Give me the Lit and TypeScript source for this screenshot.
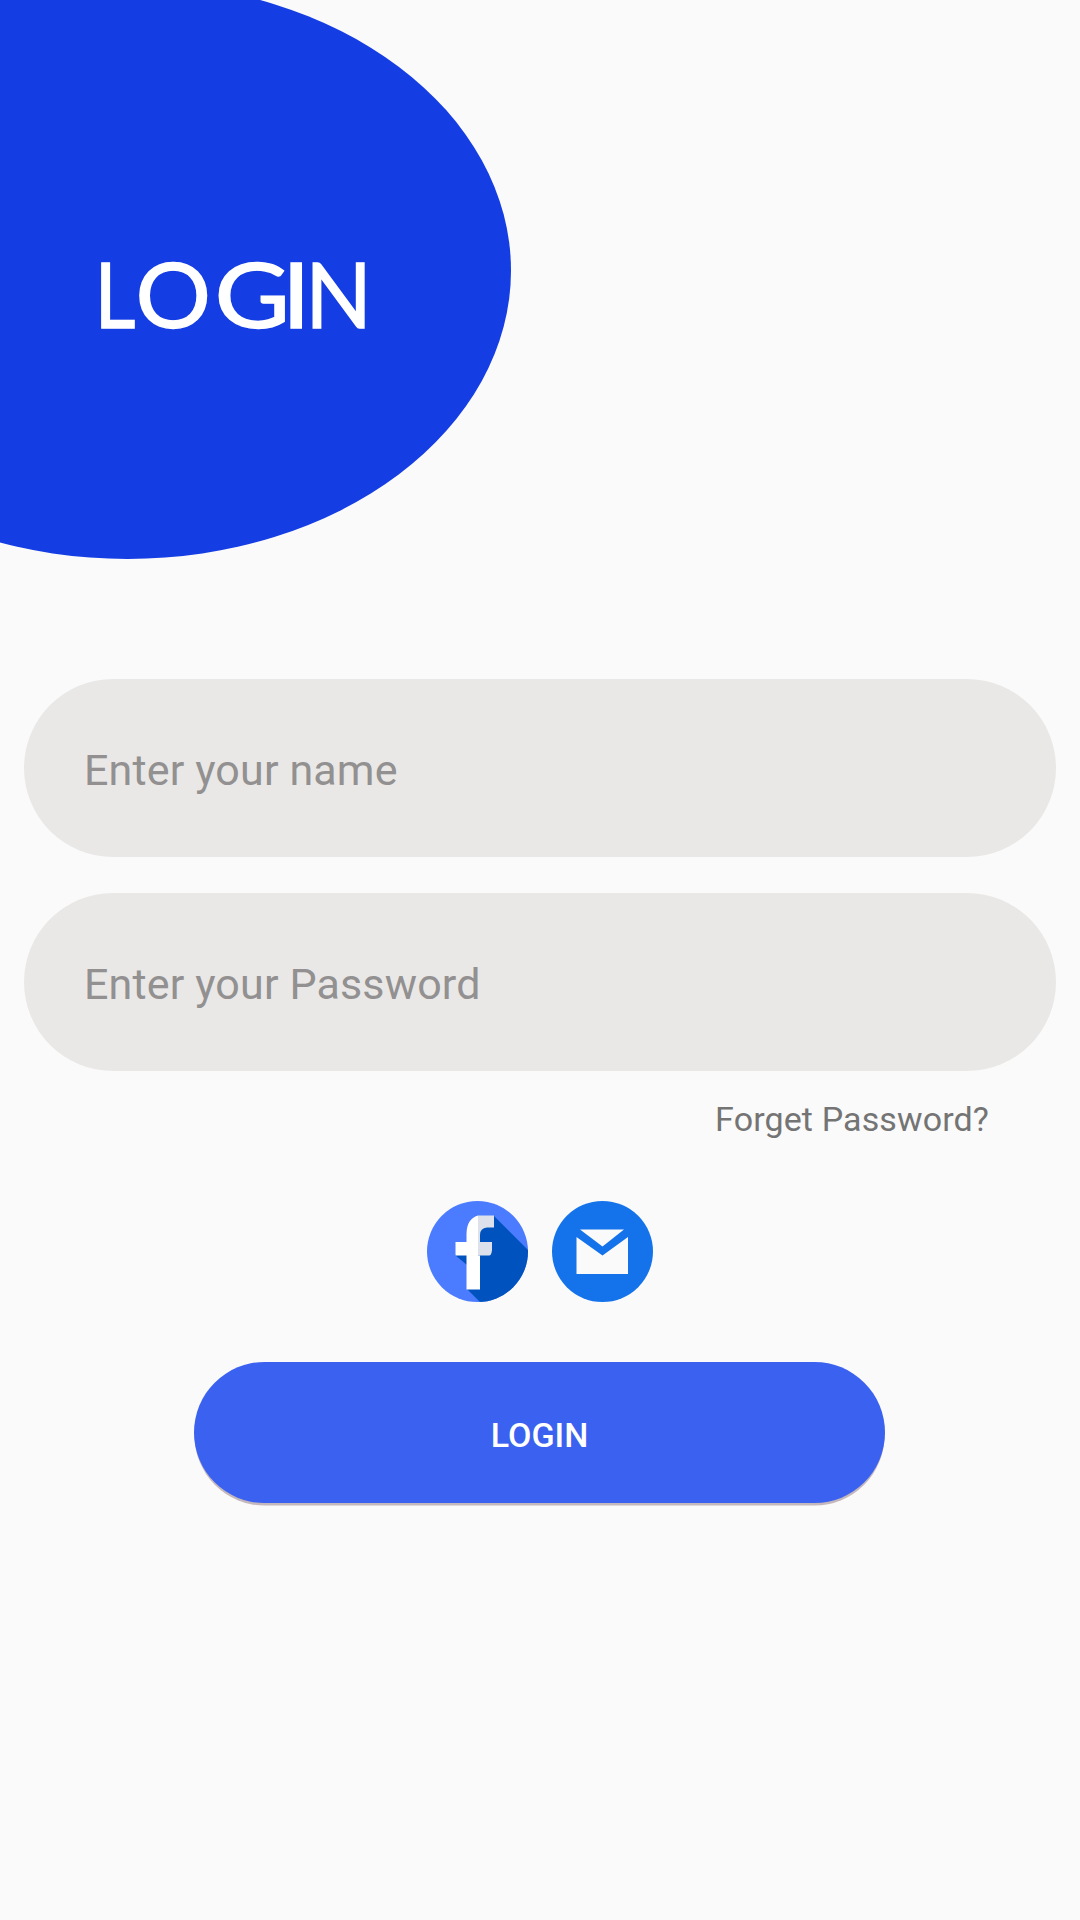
import { LitElement, html, css } from "lit";
import { customElement } from "lit/decorators.js";

@customElement("app-root")
export class AppRoot extends LitElement {
  static styles = css`
    :host { display: block; }
    * { box-sizing: border-box; }
    .screen {
      width: 1080px;
      height: 1920px;
      background: #fafafa;
      font-family: Roboto, "Liberation Sans", sans-serif;
      display: flex;
      flex-direction: column;
      overflow: hidden;
    }
    .hero { display: block; width: 540px; height: 560px; flex: none; }
    .title {
      font-family: Lato, "Liberation Sans", sans-serif;
      font-size: 91.5px;
      fill: #fff;
      stroke: #fff;
      stroke-width: 1.4px;
    }
    .form {
      display: flex;
      flex-direction: column;
      gap: 36px;
      padding: 119px 24px 0;
    }
    .field {
      display: block;
      width: 100%;
      height: 178px;
      border: 0;
      outline: 0;
      border-radius: 89px;
      background: #e9e8e6;
      padding: 4px 60px 0;
      font-family: inherit;
      font-size: 43px;
      letter-spacing: 0.15px;
      color: #333;
    }
    .field::placeholder { color: #929090; opacity: 1; }
    .forget {
      align-self: flex-end;
      margin: 26px 91px 0 0;
      font-size: 34px;
      line-height: 44px;
      letter-spacing: 0.12px;
      color: #747474;
    }
    .social {
      display: flex;
      justify-content: center;
      gap: 24px;
      margin-top: 60px;
    }
    .social svg { display: block; width: 101px; height: 101px; }
    .login {
      align-self: center;
      margin: 60px 1px 0 0;
      width: 691px;
      height: 141px;
      border: 0;
      padding: 5px 0 0;
      border-radius: 71px;
      background: #3b61f0;
      box-shadow: 0 3px 0 -0.5px #c4b8bc;
      color: #fff;
      font-family: inherit;
      font-weight: 500;
      font-size: 34px;
    }
  `;

  private hero() {
    return html`<svg class="hero" viewBox="0 0 540 560">
      <ellipse cx="127.5" cy="270.6" rx="383.5" ry="288.4" fill="#143de4" />
      <g class="title">
        <text transform="translate(94.500 328) scale(.87 1)">L</text>
        <text transform="translate(135.400 328) scale(1.03 1)">O</text>
        <text transform="translate(214.600 328) scale(1.13 1)" x="0 59.5">GI</text>
        <text transform="translate(305.200 328) scale(.955 1)">N</text>
      </g>
    </svg>`;
  }

  private facebook() {
    return html`<svg viewBox="0 0 101 101">
      <defs><clipPath id="disc"><circle cx="50.5" cy="50.5" r="50.5" /></clipPath></defs>
      <g clip-path="url(#disc)">
        <rect width="101" height="101" fill="#4b7bff" />
        <path d="M67 15 L101 49 V101 H53 L40 88 V64 L28 54 Z" fill="#0053bf" />
      </g>
      <path d="M51 14.5 H67 V26.5 H60 Q53 27 53 34 V41 H65 V49 Q64.5 54.5 62 54.5 H51 Z" fill="#dce1eb" />
      <path d="M51 14.5 Q39.500 18 39.500 33 V41 H28.500 V54.500 H39.500 V88.500 H53 V54.500 H51 Z" fill="#fff" />
    </svg>`;
  }

  private mail() {
    return html`<svg viewBox="0 0 101 101">
      <circle cx="50.500" cy="50.500" r="50.500" fill="#1473eb" />
      <path d="M28 28.500 H72 L50.500 45.500 Z" fill="#fafafa" />
      <path d="M24.500 36 L50.500 54.500 L76 36 V73 H24.500 Z" fill="#fafafa" />
    </svg>`;
  }

  render() {
    return html`<main class="screen">
      ${this.hero()}
      <div class="form">
        <input class="field" type="text" placeholder="Enter your name" />
        <input class="field" type="password" placeholder="Enter your Password" />
      </div>
      <div class="forget">Forget Password?</div>
      <div class="social">${this.facebook()}${this.mail()}</div>
      <button class="login">LOGIN</button>
    </main>`;
  }
}
